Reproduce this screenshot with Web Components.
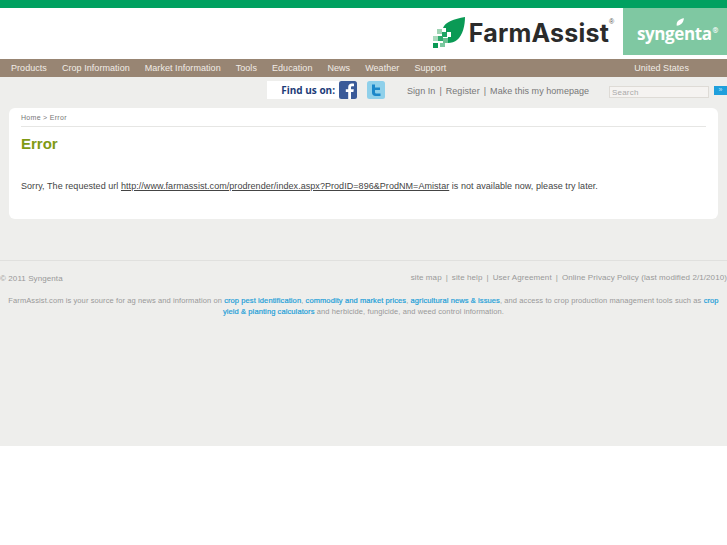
<!DOCTYPE html>
<html>
<head>
<meta charset="utf-8">
<title>FarmAssist - Error</title>
<style>
html, body { margin: 0; padding: 0; background: #fff; }
body { font-family: "Liberation Sans", Arial, sans-serif; overflow: hidden; }
</style>
</head>
<body>
<fa-page>
  <fa-header></fa-header>
  <fa-nav></fa-nav>
  <fa-toolbar></fa-toolbar>
  <fa-card>
    <fa-crumbs slot="crumbs"></fa-crumbs>
    <h1 slot="title">Error</h1>
    Sorry, The requested url <a href="#">http://www.farmassist.com/prodrender/index.aspx?ProdID=896&amp;ProdNM=Amistar</a> is not available now, please try later.
  </fa-card>
  <fa-footer></fa-footer>
</fa-page>

<script>
// Small helper so every element below stays a few lines long.
function define(name, html) {
    const template = document.createElement('template');
    template.innerHTML = html;
    customElements.define(name, class extends HTMLElement {
        constructor() {
            super();
            this.attachShadow({mode: 'open'});
            this.shadowRoot.appendChild(template.content.cloneNode(true));
        }
    });
}

define('fa-page', `
<style>
:host { display: block; height: 446px; background: #eeeeec; }
</style>
<slot></slot>
`);

define('fa-header', `
<style>
:host { display: flex; flex-direction: column; height: 59px; background: #fff; }
.top { height: 8px; background: #00a160; }
.row { flex: 1; display: flex; justify-content: flex-end; padding-bottom: 4px; }
.farm { display: flex; align-items: center; margin-right: 7px; padding-top: 2px; }
.farm svg { margin-right: 3px; }
.word { font: 700 25px/1 Inter, "Liberation Sans", sans-serif; letter-spacing: .2px; color: #2b2b2b; margin-top: 2px; }
.reg { font: 7px/1 "Liberation Sans", sans-serif; color: #555; align-self: flex-start; margin: 8px 0 0 0; width: 7px; }
.syn { width: 104px; background: #7fc8a2; display: flex; align-items: center; justify-content: center; padding: 3px 0 0 5px; box-sizing: border-box; }
.syn span { position: relative; font: 700 17px/1 "Open Sans", sans-serif; color: #fff; letter-spacing: -.4px; }
.syn sup { font-size: 7px; vertical-align: 7px; line-height: 0; margin-left: 1px; }
.syn svg { position: absolute; left: 39px; top: -7px; }
</style>
<div class="top"></div>
<div class="row">
  <div class="farm">
    <svg width="34" height="31" viewBox="0 0 34 31">
      <path d="M11 11C13 5 22 2 33 0C33 8 31 18 25 23C23 25 19 26 16 26L16 20L19 20L19 15L14 15L14 11Z" fill="#0a9a55"/>
      <rect x="5" y="12" width="5" height="5" fill="#9fd4b4"/>
      <rect x="10" y="15" width="5" height="5" fill="#1fa463"/>
      <rect x="1" y="19" width="5" height="5" fill="#a9dabd"/>
      <rect x="6" y="19" width="5" height="5" fill="#2fa96c"/>
      <rect x="11" y="21" width="5" height="5" fill="#6cc193"/>
      <rect x="1" y="26" width="5" height="5" fill="#0a9a55"/>
      <rect x="8" y="26" width="5" height="4" fill="#7cc9a0"/>
    </svg>
    <span class="word">FarmAssist</span><span class="reg">®</span>
  </div>
  <div class="syn"><span><svg width="8" height="8" viewBox="0 0 11 10"><path d="M1 10C0 5 4 1 11 0C10 6 7 10 1 10Z" fill="#fff"/></svg>syngenta<sup>®</sup></span></div>
</div>
`);

define('fa-nav', `
<style>
:host { display: flex; align-items: center; height: 18px; padding: 0 0 1px 11px; box-sizing: border-box; gap: 15px; background: #988573; color: #f1ece6; font-size: 9px; letter-spacing: .05px; white-space: nowrap; }
.country { margin-left: 173px; }
</style>
<span>Products</span><span>Crop Information</span><span>Market Information</span><span>Tools</span><span>Education</span><span>News</span><span>Weather</span><span>Support</span>
<span class="country">United States</span>
`);

define('fa-toolbar', `
<style>
:host { display: flex; align-items: center; height: 31px; padding-left: 267px; font-size: 9px; color: #777; box-sizing: border-box; white-space: nowrap; }
.find { flex: none; display: flex; align-items: center; justify-content: flex-end; width: 72px; height: 18px; padding-right: 4px; box-sizing: border-box; background: #fff; font: 700 10px "Open Sans", sans-serif; color: #1d3c78; margin-top: -5px; }
.icons { flex: none; display: flex; gap: 10px; margin-top: -5px; }
.links { flex: none; margin: -4px 0 0 22px; display: flex; gap: 4px; letter-spacing: .05px; }
form { flex: none; display: flex; gap: 5px; margin: -2px 0 0 auto; }
.box { width: 100px; height: 12px; box-sizing: border-box; background: #f5f3f1; border: 1px solid #dedbd6; font-size: 8px; line-height: 11px; padding-left: 2px; color: #aaa; letter-spacing: .2px; }
.go { width: 13px; height: 9px; background: #1e9fdc; color: #bfe6f8; font-size: 7px; line-height: 8px; text-align: center; }
</style>
<div class="find">Find us on:</div>
<div class="icons">
  <svg width="18" height="18" viewBox="0 0 18 18"><rect width="18" height="18" rx="2.5" fill="#3a5a98"/><path d="M12 18V11H14.4L14.8 8.2H12V6.6C12 5.7 12.3 5.2 13.4 5.2H15V2.7C14.6 2.6 13.8 2.6 12.9 2.6C10.8 2.6 9.2 3.9 9.2 6.2V8.2H6.8V11H9.2V18Z" fill="#fff"/></svg>
  <svg width="18" height="18" viewBox="0 0 18 18"><rect width="18" height="18" rx="2.5" fill="#8fd0ea"/><path d="M5 3.5H8V6.5H13V9H8V11C8 12 8.6 12.5 9.6 12.5H13.5V15H8.5C6.3 15 5 13.6 5 11.5Z" fill="#1b87c9"/></svg>
</div>
<div class="links"><span>Sign In</span><span>|</span><span>Register</span><span>|</span><span>Make this my homepage</span></div>
<form><div class="box">Search</div><div class="go">»</div></form>
`);

define('fa-card', `
<style>
:host { display: block; margin: 0 9px; height: 111px; padding: 0 12px; background: #fff; border-radius: 6px; font-size: 9px; color: #444; letter-spacing: .05px; }
.title { margin-top: 7px; }
.text { margin-top: 25px; line-height: 14px; white-space: nowrap; }
::slotted(h1) { margin: 0; font-size: 15px; line-height: 20px; color: #7f9a14; letter-spacing: 0; }
::slotted(a) { color: #444; }
</style>
<slot name="crumbs"></slot>
<div class="title"><slot name="title"></slot></div>
<div class="text"><slot></slot></div>
`);

define('fa-crumbs', `
<style>
:host { display: block; height: 18px; line-height: 20px; border-bottom: 1px solid #e6e6e4; font-size: 7px; color: #777; letter-spacing: .3px; }
</style>
Home &gt; Error
`);

define('fa-footer', `
<style>
:host { display: block; margin-top: 41px; border-top: 1px solid #e0e0de; color: #999; font-size: 8px; }
.row { display: flex; justify-content: space-between; padding-top: 11px; line-height: 12px; letter-spacing: .09px; }
.copy { margin-top: 1px; }
.links { display: flex; gap: 4px; }
p { margin: 10px 8px 0; font-size: 7.5px; line-height: 11px; text-align: center; letter-spacing: .1px; }
b { font-weight: 400; color: #1e9fd8; -webkit-text-stroke: .2px #1e9fd8; }
</style>
<div class="row">
  <span class="copy">© 2011 Syngenta</span>
  <span class="links"><span>site map</span><span>|</span><span>site help</span><span>|</span><span>User Agreement</span><span>|</span><span>Online Privacy Policy (last modified 2/1/2010)</span></span>
</div>
<p>FarmAssist.com is your source for ag news and information on <b>crop pest identification</b>, <b>commodity and market prices</b>, <b>agricultural news &amp; issues</b>, and access to crop production management tools such as <b>crop</b> <b>yield &amp; planting calculators</b> and herbicide, fungicide, and weed control information.</p>
`);
</script>
</body>
</html>
